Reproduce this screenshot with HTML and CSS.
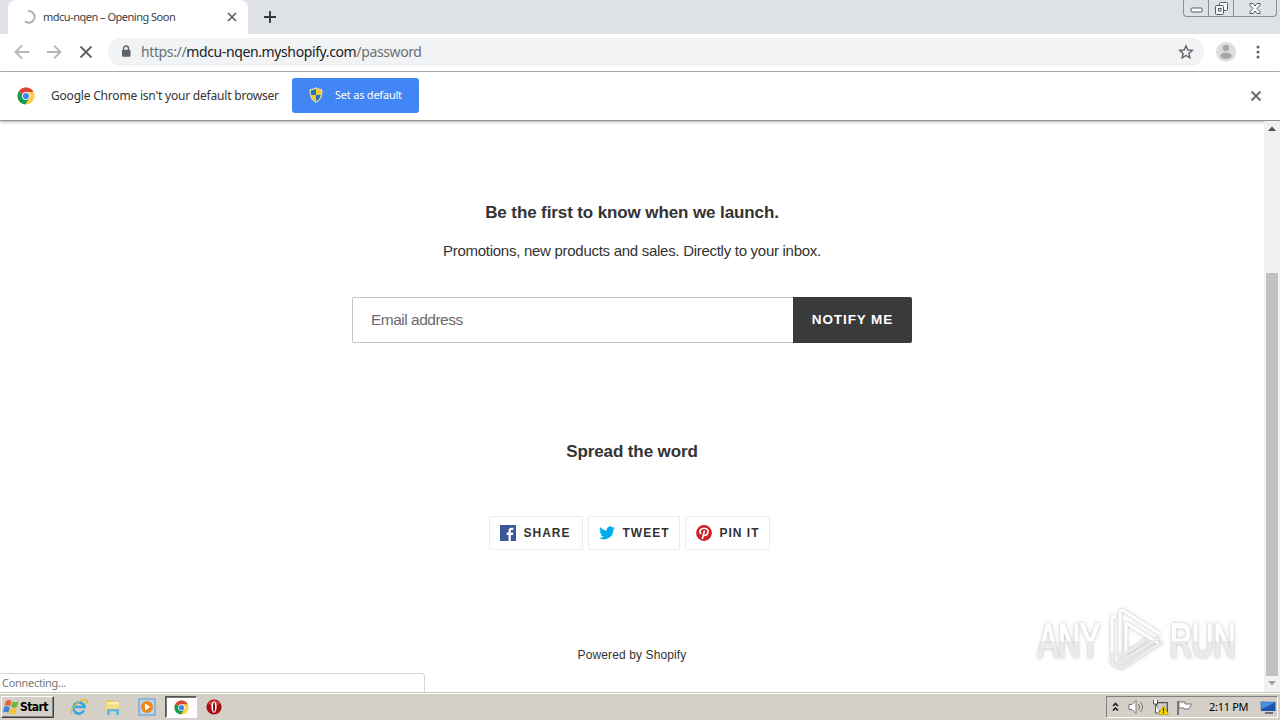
FILE: index.html
```html
<!DOCTYPE html>
<html lang="en">
<head>
    <meta charset="UTF-8">
    <title>mdcu-nqen – Opening Soon</title>
    <link rel="stylesheet" href="styles.css">
</head>
<body>
    <div class="desktop">
        <!-- Tab strip -->
        <header class="tabstrip">
            <div class="tab">
                <svg class="spinner" width="14" height="14" viewBox="0 0 14 14"><path d="M6 1.2A5.8 5.8 0 1 1 3 11.3" fill="none" stroke="#a9acb1" stroke-width="1.8"/></svg>
                <span class="tab-title">mdcu-nqen – Opening Soon</span>
                <svg width="10" height="10" viewBox="0 0 10 10"><path d="M1 1l8 8M9 1L1 9" stroke="#5f6368" stroke-width="1.7"/></svg>
            </div>
            <svg class="new-tab" width="12" height="12" viewBox="0 0 12 12"><path d="M6 0v12M0 6h12" stroke="#35393f" stroke-width="1.9"/></svg>
            <div class="window-buttons">
                <span><svg width="13" height="6" viewBox="0 0 13 6"><rect x="1" y="1" width="11" height="4" rx="1" fill="#fff" stroke="#555b66"/></svg></span>
                <span><svg width="13" height="13" viewBox="0 0 13 13" fill="#f5f6f8" stroke="#555b66"><rect x="4.5" y=".5" width="8" height="8" rx="1"/><rect x=".5" y="3.5" width="8" height="9" rx="1"/><rect x="3.5" y="6.5" width="2.5" height="2.5"/></svg></span>
                <span><svg width="12" height="11" viewBox="0 0 12 11"><path d="M1 .5h3l2 2.5 2-2.5h3v1.7L8 5.500l3 3.300v1.700H8L6 8l-2 2.500H1V8.800l3-3.300-3-3.300z" fill="#fff" stroke="#555b66"/></svg></span>
            </div>
        </header>

        <!-- Toolbar -->
        <nav class="toolbar">
            <svg width="16" height="16" viewBox="0 0 16 16"><path d="M15 8H2M8 1.500L1.500 8 8 14.500" fill="none" stroke="#b5b7ba" stroke-width="1.8"/></svg>
            <svg width="16" height="16" viewBox="0 0 16 16"><path d="M1 8h13M8 1.500L14.500 8 8 14.500" fill="none" stroke="#b5b7ba" stroke-width="1.8"/></svg>
            <svg width="16" height="16" viewBox="0 0 16 16"><path d="M2.500 2.500l11 11M13.500 2.500l-11 11" stroke="#5f6368" stroke-width="1.9"/></svg>
            <div class="omnibox">
                <svg width="10" height="13" viewBox="0 0 10 13"><path d="M2.500 5V3.500a2.500 2.500 0 0 1 5 0V5" fill="none" stroke="#5f6368" stroke-width="1.400"/><rect x="1" y="4.800" width="8.500" height="7" rx="1" fill="#5f6368"/></svg>
                <span class="url">https://<b>mdcu-nqen.myshopify.com</b>/password</span>
                <svg width="16" height="16" viewBox="0 0 16 16"><path d="M8 1.800l1.800 4.200 4.500.4-3.400 3 1 4.400L8 11.500l-3.900 2.300 1-4.400-3.400-3 4.500-.4z" fill="none" stroke="#5f6368" stroke-width="1.400"/></svg>
            </div>
            <svg class="avatar" width="20" height="20" viewBox="0 0 20 20"><circle cx="10" cy="10" r="10" fill="#dcdddf"/><circle cx="10" cy="6" r="3.200" fill="#a5a7aa"/><ellipse cx="10" cy="13.700" rx="5.700" ry="3.200" fill="#a5a7aa"/></svg>
            <svg class="kebab" width="4" height="14" viewBox="0 0 4 14" fill="#5f6368"><circle cx="2" cy="2" r="1.500"/><circle cx="2" cy="7" r="1.500"/><circle cx="2" cy="12" r="1.500"/></svg>
        </nav>

        <!-- Default browser bar -->
        <div class="infobar">
            <svg width="18" height="18" viewBox="0 0 18 18"><use href="#chrome"/></svg>
            <span class="infobar-text">Google Chrome isn't your default browser</span>
            <div class="set-default">
                <svg width="14" height="16" viewBox="0 0 14 16"><path d="M7 .7C5 2 3 2.500 1 2.500 1 9 2 13 7 15.300 12 13 13 9 13 2.500 11 2.500 9 2 7 .7z" fill="#f4c92e"/><path d="M7 2v6H2.200Q1.700 6 1.800 3.300 5 3.300 7 2zM7 8h4.800Q11 12.500 7 14.300z" fill="#2c6fbb"/><path d="M7 .7C5 2 3 2.500 1 2.500 1 9 2 13 7 15.300 12 13 13 9 13 2.500 11 2.500 9 2 7 .7z" fill="none" stroke="#d9e2d8"/></svg>
                <span>Set as default</span>
            </div>
            <svg class="infobar-close" width="12" height="12" viewBox="0 0 12 12"><path d="M1.500 1.500l9 9M10.500 1.500l-9 9" stroke="#6b6e72" stroke-width="2"/></svg>
        </div>

        <!-- Page -->
        <div class="viewport">
            <main class="page">
                <h2 class="launch">Be the first to know when we launch.</h2>
                <p class="promo">Promotions, new products and sales. Directly to your inbox.</p>
                <form class="signup">
                    <div class="email">Email address</div>
                    <div class="notify">NOTIFY ME</div>
                </form>
                <h2 class="spread">Spread the word</h2>
                <div class="social">
                    <div class="share">
                        <svg width="16" height="16" viewBox="0 0 16 16"><rect width="16" height="16" rx=".6" fill="#3b5998"/><path d="M8.500 16v-6H6.700V7.500h1.800V5.800c0-2 1.200-3 3-3h1.900V5H12c-1 0-1.200.4-1.200 1.200v1.300h2.500L13 10h-2.200v6z" fill="#fff"/></svg>
                        <span>SHARE</span>
                    </div>
                    <div class="share tweet">
                        <svg width="16" height="14" viewBox="0 0 24 20"><path d="M24 2.400c-.9.400-1.800.6-2.800.8 1-.6 1.800-1.600 2.200-2.700-1 .6-2 1-3.100 1.200A4.900 4.900 0 0 0 11.900 6.200C7.800 6 4.200 4 1.700.9c-1.300 2.200-.7 5.100 1.500 6.600-.8 0-1.600-.2-2.200-.6 0 2.300 1.600 4.400 3.900 4.900-.7.200-1.500.2-2.200.1.600 2 2.400 3.400 4.600 3.400A9.900 9.900 0 0 1 0 17.300 14 14 0 0 0 21.500 4.900c1-.7 1.800-1.600 2.500-2.500z" fill="#00aced"/></svg>
                        <span>TWEET</span>
                    </div>
                    <div class="share pin">
                        <svg width="16" height="16" viewBox="0 0 16 16"><circle cx="8" cy="8" r="7.900" fill="#cb2027"/><path d="M5 9C2.500 6 5 3.300 8.200 3.300c3 0 4.200 2 3.700 4.200C11.300 10.500 8.500 11 7.600 9.600M8.500 5.500L6.300 14" fill="none" stroke="#fff" stroke-width="1.600"/></svg>
                        <span>PIN IT</span>
                    </div>
                </div>
                <p class="powered">Powered by Shopify</p>
            </main>
            <div class="scrollbar">
                <svg width="8" height="5" viewBox="0 0 8 5"><path d="M0 5l4-4.500L8 5z" fill="#505050"/></svg>
                <div class="thumb"></div>
                <svg width="8" height="5" viewBox="0 0 8 5"><path d="M0 0l4 4.500L8 0z" fill="#a0a0a0"/></svg>
            </div>
            <div class="status">Connecting...</div>
            <div class="watermark">
                <span class="any">ANY</span>
                <svg width="60" height="66" viewBox="0 0 60 66" fill="none" stroke-linejoin="round">
                    <path d="M13 46V5q0-4 4-2l36 23M19 45V15l32 20M5 50V12q0-4 4-3" stroke="#fff" stroke-width="3"/>
                    <path d="M5 44v9q0 3 3 4l7 3 40-26M13 44v7q0 3 3 1l36-22M19 45l20-13" stroke="#ebebeb" stroke-width="3"/>
                </svg>
                <span class="run">RUN</span>
            </div>
        </div>

        <!-- Taskbar -->
        <footer class="taskbar">
            <div class="start">
                <svg width="17" height="16" viewBox="0 0 17 16"><path d="M3 2q3-2 5.500 0L7 7.500Q4.500 5.500 1.500 7z" fill="#e8612c"/><path d="M9.500 2.500q3 1.500 6 0L14 8q-3 1.500-6 0z" fill="#70b541"/><path d="M1.200 8q3-1.500 5.500.4L5.300 14Q3 12 0 13.500z" fill="#3d83d3"/><path d="M7.700 9q3 1.500 6 0L12.200 14.500q-3 1.500-6 0z" fill="#f7c430"/></svg>
                <span>Start</span>
            </div>
            <div class="task ie"><svg width="18" height="18" viewBox="0 0 18 18"><path d="M14 12.500A5.600 5.600 0 1 1 14.500 9H5" fill="none" stroke="#36a5df" stroke-width="2.600"/><path d="M1.500 16C-1 12 11-1 16.500 2q1.500 1-.5 4" fill="none" stroke="#e5b83c" stroke-width="1.400"/></svg></div>
            <div class="task explorer"><svg width="18" height="18" viewBox="0 0 18 18"><path d="M2 2h6l1 1.500h7V12H2z" fill="#e8c95c"/><path d="M3 4h12v6H3z" fill="#fbefad"/><path d="M1 6.500h15l-1 6H2z" fill="#f1dc7e"/><path d="M3 17v-6h12v6h-3v-3.500H6V17z" fill="#68b9dc"/></svg></div>
            <div class="task media"><svg width="18" height="18" viewBox="0 0 18 18"><rect x="1" y="1" width="16" height="16" fill="#b8d7f1" stroke="#5b96c9"/><circle cx="9" cy="9" r="6" fill="#f08519"/><path d="M7 5.500v7L12.500 9z" fill="#fff"/></svg></div>
            <div class="task active"><svg width="15" height="15" viewBox="0 0 18 18"><use href="#chrome"/></svg></div>
            <div class="task opera"><svg width="16" height="16" viewBox="0 0 16 16"><circle cx="8" cy="8" r="7.600" fill="#a90d13"/><path d="M2 4q6-5 12 0-2 3-6 3T2 4z" fill="#cf4746"/><ellipse cx="8" cy="8" rx="2.600" ry="5.800" fill="#fff"/><ellipse cx="8" cy="8" rx="1" ry="4.700" fill="#7d0b10"/></svg></div>
            <div class="tray">
                <svg width="7" height="10" viewBox="0 0 7 10"><path d="M1 4l2.500-2.500L6 4M1 8.500L3.500 6 6 8.500" fill="none" stroke="#111" stroke-width="1.500"/></svg>
                <svg class="speaker" width="17" height="16" viewBox="0 0 17 16"><path d="M1 5.500h3l4-4v13l-4-4H1z" fill="#fff" stroke="#777"/><path d="M10.500 5q2 3 0 6M12.500 3q4 5 0 10" fill="none" stroke="#777"/></svg>
                <svg class="network" width="17" height="16" viewBox="0 0 17 16"><rect x="4.500" y="3.500" width="11" height="9" fill="#aaa" stroke="#555"/><rect x="6" y="5" width="8" height="6" fill="#d1d1d1"/><path d="M1.500 1v4h4V1M3.500 5v9h4" fill="#fff" stroke="#555"/><path d="M11.500 6l5 9.500h-10z" fill="#ffdc00" stroke="#b69500" stroke-width=".6"/><path d="M11.500 9v3.500M11.500 13.300v1.200" stroke="#222" stroke-width="1.200"/></svg>
                <svg class="flag" width="17" height="15" viewBox="0 0 17 15"><path d="M2 1v14" stroke="#777" stroke-width="2"/><path d="M3 2h6v2h6.500L13 9H8V8H3z" fill="#fff" stroke="#777"/></svg>
                <span class="clock">2:11 PM</span>
                <svg class="monitor" width="16" height="13" viewBox="0 0 16 13"><path d="M.5.500L15.500 1v9L1 10z" fill="#1755b0"/><path d="M1 1l14 .5L1.500 8z" fill="#4b94dc"/><path d="M5 12h8" stroke="#44556a" stroke-width="1.500"/></svg>
            </div>
        </footer>
    </div>

    <!-- Shared logo -->
    <svg class="symbols" width="0" height="0">
        <symbol id="chrome" viewBox="0 0 18 18">
            <circle cx="9" cy="9" r="8.500" fill="#ffcd40"/>
            <path d="M9 9L1.640 4.750A8.500 8.500 0 0 0 8.200 17.460L12.500 11z" fill="#0f9d58"/>
            <path d="M9 9L1.640 4.750A8.500 8.500 0 0 1 16.500 5H9z" fill="#db4437"/>
            <circle cx="9" cy="9" r="4" fill="#fff"/>
            <circle cx="9" cy="9" r="3.100" fill="#4285f4"/>
        </symbol>
    </svg>
</body>
</html>
```

FILE: styles.css
```css
/* Global Styles */
* {
    box-sizing: border-box;
}

body {
    margin: 0;
    overflow: hidden;
    background-color: #fff;
    font-family: "Noto Sans", sans-serif;
}

svg {
    display: block;
    flex: none;
}

.symbols {
    position: absolute;
}

.desktop {
    display: flex;
    flex-direction: column;
    width: 1280px;
    height: 720px;
}

/* Tab strip */
.tabstrip {
    display: flex;
    height: 34px;
    padding-left: 8px;
    background: #dee1e6;
    flex: none;
}

.tab {
    display: flex;
    align-items: center;
    width: 240px;
    padding: 0 11px 0 14px;
    background: #fff;
    border-radius: 8px 8px 0 0;
}

.tab-title {
    flex: 1;
    margin: -2px 0 0 7px;
    font-size: 11px;
    letter-spacing: -0.5px;
    white-space: nowrap;
    color: #3c4043;
}

.new-tab {
    margin: 11px 0 0 16px;
}

.window-buttons {
    display: flex;
    width: 94px;
    height: 17px;
    margin: 0 3px 0 auto;
    border: 1px solid #888d98;
    border-top: 0;
    border-radius: 0 0 4px 4px;
}

.window-buttons span {
    display: flex;
    justify-content: center;
    align-items: center;
    width: 25px;
    border-right: 1px solid #888d98;
}

.window-buttons span:first-child {
    padding-top: 4px;
}

.window-buttons span:last-child {
    flex: 1;
    border: 0;
}

/* Toolbar */
.toolbar {
    display: flex;
    align-items: center;
    gap: 16px;
    height: 38px;
    padding: 0 20px 2px 14px;
    border-bottom: 1px solid #b2b4b8;
    flex: none;
}

.omnibox {
    display: flex;
    align-items: center;
    width: 1096px;
    height: 28px;
    margin-left: -2px;
    padding: 0 10px 0 13px;
    border-radius: 14px;
    background: #f1f3f4;
}

.url {
    flex: 1;
    margin-left: 10px;
    font-size: 14px;
    letter-spacing: -0.38px;
    white-space: nowrap;
    color: #6b7075;
}

.url b {
    font-weight: normal;
    color: #202124;
}

.avatar {
    margin-left: -4px;
}

.kebab {
    margin-left: 4px;
}

/* Default browser bar */
.infobar {
    position: relative;
    display: flex;
    align-items: center;
    height: 49px;
    padding: 0 18px 0 17px;
    border-bottom: 1px solid #929292;
    box-shadow: 0 1px 3px rgba(0, 0, 0, 0.3);
    flex: none;
}

.infobar-text {
    width: 241px;
    margin: -2px 0 0 16px;
    font-size: 12px;
    letter-spacing: -0.2px;
    white-space: nowrap;
    color: #333;
}

.set-default {
    display: flex;
    align-items: center;
    width: 127px;
    height: 35px;
    margin-top: -2px;
    padding-left: 17px;
    border-radius: 3px;
    background: #4285f4;
    font-size: 11px;
    letter-spacing: -0.22px;
    white-space: nowrap;
    color: #fff;
}

.set-default span {
    margin: -2px 0 0 12px;
}

.infobar-close {
    margin-left: auto;
}

/* Page */
.viewport {
    position: relative;
    display: flex;
    flex: 1;
    min-height: 0;
}

.page {
    display: flex;
    flex-direction: column;
    align-items: center;
    flex: 1;
    font-family: "Liberation Sans", Arial, sans-serif;
    color: #333;
}

h2 {
    margin: 0;
    font-size: 17px;
    line-height: 20px;
    letter-spacing: -0.11px;
    white-space: nowrap;
}

.launch {
    margin-top: 82px;
}

.promo {
    margin: 18px 0 0;
    font-size: 15px;
    line-height: 20px;
    letter-spacing: -0.28px;
    white-space: nowrap;
}

.signup {
    display: flex;
    width: 560px;
    height: 46px;
    margin-top: 36px;
}

.email {
    flex: 1;
    padding-left: 18px;
    border: 1px solid #c4c4c4;
    border-right: 0;
    border-radius: 2px 0 0 2px;
    font-size: 15.5px;
    line-height: 44px;
    letter-spacing: -0.5px;
    color: #6b6b6b;
}

.notify {
    width: 119px;
    border-radius: 0 2px 2px 0;
    background: #3a3a3a;
    font-size: 13.5px;
    font-weight: bold;
    line-height: 45px;
    letter-spacing: 0.9px;
    text-align: center;
    color: #fff;
}

.spread {
    margin-top: 99px;
}

.social {
    display: flex;
    gap: 5px;
    width: 287px;
    height: 34px;
    margin-top: 54px;
}

.share {
    display: flex;
    align-items: center;
    width: 94px;
    padding-left: 10px;
    border: 1px solid #ececec;
    border-radius: 2px;
    font-size: 12px;
    font-weight: bold;
    letter-spacing: 1px;
    white-space: nowrap;
}

.share span {
    margin-left: 8px;
}

.tweet {
    width: 92px;
}

.pin {
    width: 85px;
}

.powered {
    margin: 97px 0 0;
    font-size: 12px;
    line-height: 16px;
    letter-spacing: 0.12px;
    white-space: nowrap;
}

.scrollbar {
    display: flex;
    flex-direction: column;
    align-items: center;
    justify-content: space-between;
    width: 16px;
    padding: 5px 0 6px;
    background: #f1f1f1;
}

.thumb {
    width: 12px;
    height: 403px;
    margin-top: 137px;
    background: #c1c1c1;
}

/* Status bubble */
.status {
    position: absolute;
    left: 0;
    bottom: 0;
    width: 425px;
    height: 19px;
    padding-left: 2px;
    border: 1px solid #d5d5d5;
    border-width: 1px 1px 0 0;
    border-radius: 0 4px 0 0;
    background: #fff;
    font-size: 11px;
    line-height: 18px;
    letter-spacing: -0.3px;
    color: #777;
}

/* Watermark */
.watermark {
    position: absolute;
    left: 1038px;
    top: 487px;
    display: flex;
    align-items: center;
    height: 66px;
    font: 48px/48px "Liberation Sans", Arial, sans-serif;
    filter: drop-shadow(0 0 1px rgba(0, 0, 0, 0.16)) drop-shadow(0 0 2px rgba(0, 0, 0, 0.14));
}

.watermark span {
    width: 66px;
    background: linear-gradient(#fff 50%, #ebebeb 50%);
    -webkit-background-clip: text;
    background-clip: text;
    color: transparent;
    -webkit-text-stroke: 2px transparent;
    white-space: nowrap;
}

.watermark .any,
.watermark .run {
    width: 104px;
    transform: scaleX(0.63);
    transform-origin: left;
    margin-right: -38px;
}

.watermark svg {
    margin: 0 3px;
}

/* Taskbar */
.taskbar {
    display: flex;
    height: 28px;
    padding: 3px 2px 1px 1px;
    border-top: 1px solid #c5c5bf;
    background: #d4d0c8;
    box-shadow: inset 0 1px #fff;
    flex: none;
}

.start {
    display: flex;
    align-items: center;
    width: 53px;
    height: 22px;
    padding-left: 1px;
    border: 1px solid #fff;
    border-right-color: #404040;
    border-bottom-color: #404040;
    box-shadow: inset -1px -1px #808080;
    font: bold 12px "DejaVu Sans Condensed", "DejaVu Sans", sans-serif;
    letter-spacing: -0.6px;
    color: #000;
}

.task {
    display: flex;
    align-items: center;
    justify-content: center;
    width: 34px;
    height: 22px;
}

.ie {
    margin-left: 8px;
}

.active {
    width: 32px;
    margin-left: 1px;
    border: 1px solid #555;
    border-right-color: #fff;
    border-bottom-color: #fff;
    box-shadow: inset 1px 1px #777;
    background: #fff;
}

.tray {
    display: flex;
    align-items: center;
    width: 172px;
    height: 22px;
    margin-left: auto;
    padding-left: 5px;
    border: 1px solid #808080;
    border-right-color: #fff;
    border-bottom-color: #fff;
    font-size: 11px;
    letter-spacing: -0.3px;
    color: #000;
}

.speaker {
    margin-left: 9px;
}

.network {
    margin-left: 7px;
}

.flag {
    margin-left: 7px;
}

.clock {
    width: 51px;
    margin: -2px 0 0 16px;
    white-space: nowrap;
}
```
